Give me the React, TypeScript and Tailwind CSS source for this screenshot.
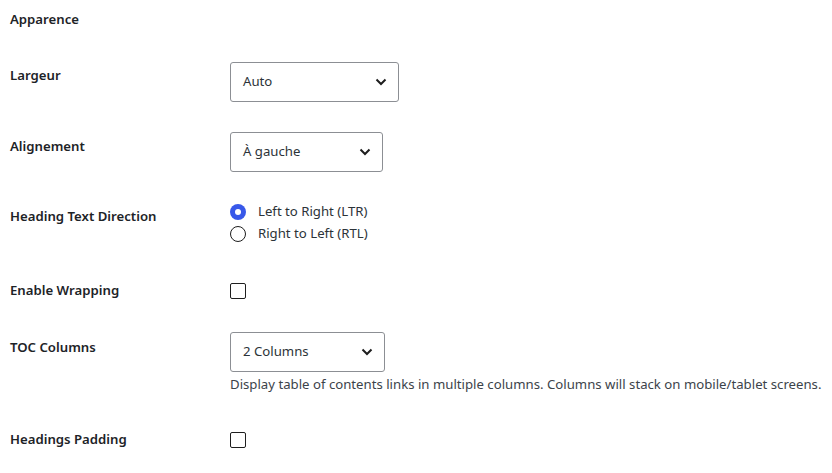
import { ReactNode } from "react"

const FONT = "[font-family:'Segoe_UI','Noto_Sans',sans-serif]"

function Chevron() {
    return (
        <svg width="12" height="8" viewBox="0 0 12 8" className="shrink-0">
            <path d="M1.5 1.5 L6 6 L10.5 1.5" fill="none" stroke="#1e1e1e" strokeWidth="2" />
        </svg>
    )
}

function Select({ value, width }: { value: string; width: string }) {
    return (
        <div className={`${width} h-[40px] flex items-center justify-between border border-[#8c8f94] rounded-[3px] bg-white pl-[12px] pr-[11px] text-[13.2px] text-[#2c3338]`}>
            <span>{value}</span>
            <Chevron />
        </div>
    )
}

function Checkbox() {
    return <div className="w-[16px] h-[16px] border border-[#1e1e1e] rounded-[2px] bg-white" />
}

function Radio({ checked, label }: { checked?: boolean; label: string }) {
    return (
        <div className="flex items-center h-[22px]">
            {checked ? (
                <div className="w-[16px] h-[16px] rounded-full bg-[#3858e9] flex items-center justify-center">
                    <div className="w-[6px] h-[6px] rounded-full bg-white" />
                </div>
            ) : (
                <div className="w-[16px] h-[16px] rounded-full border border-[#1e1e1e] bg-white" />
            )}
            <span className="ml-[12px] text-[13.2px] text-[#2c3338]">{label}</span>
        </div>
    )
}

function Row({ label, labelPad, className, children }: { label: string; labelPad: string; className: string; children: ReactNode }) {
    return (
        <div className={`flex items-start ${className}`}>
            <div className={`w-[220px] shrink-0 ${labelPad} text-[13.2px] leading-[20px] font-semibold text-[#1d2327]`}>{label}</div>
            <div>{children}</div>
        </div>
    )
}

export default function App() {
    return (
        <div className={`w-[832px] h-[473px] bg-white pl-[10px] overflow-hidden ${FONT}`}>
            <div className="pt-[9px] h-[29px] text-[13.2px] leading-[20px] font-semibold text-[#1d2327]">Apparence</div>

            <Row label="Largeur" labelPad="pt-[3px]" className="mt-[33px]">
                <Select value="Auto" width="w-[169px]" />
            </Row>

            <Row label="Alignement" labelPad="pt-[4px]" className="mt-[30px]">
                <Select value="À gauche" width="w-[153px]" />
            </Row>

            {/* text direction radios */}
            <Row label="Heading Text Direction" labelPad="pt-[5px]" className="mt-[29px]">
                <Radio checked label="Left to Right (LTR)" />
                <Radio label="Right to Left (RTL)" />
            </Row>

            <Row label="Enable Wrapping" labelPad="pt-0" className="mt-[35px]">
                <div className="pt-[3px]"><Checkbox /></div>
            </Row>

            <Row label="TOC Columns" labelPad="pt-[5px]" className="mt-[32px]">
                <Select value="2 Columns" width="w-[155px]" />
                <p className="mt-[2px] text-[13.2px] leading-[20px] text-[#3c434a] whitespace-nowrap">
                    Display table of contents links in multiple columns. Columns will stack on mobile/tablet screens.
                </p>
            </Row>

            <Row label="Headings Padding" labelPad="pt-0" className="mt-[35px]">
                <div className="pt-[3px]"><Checkbox /></div>
            </Row>
        </div>
    )
}
